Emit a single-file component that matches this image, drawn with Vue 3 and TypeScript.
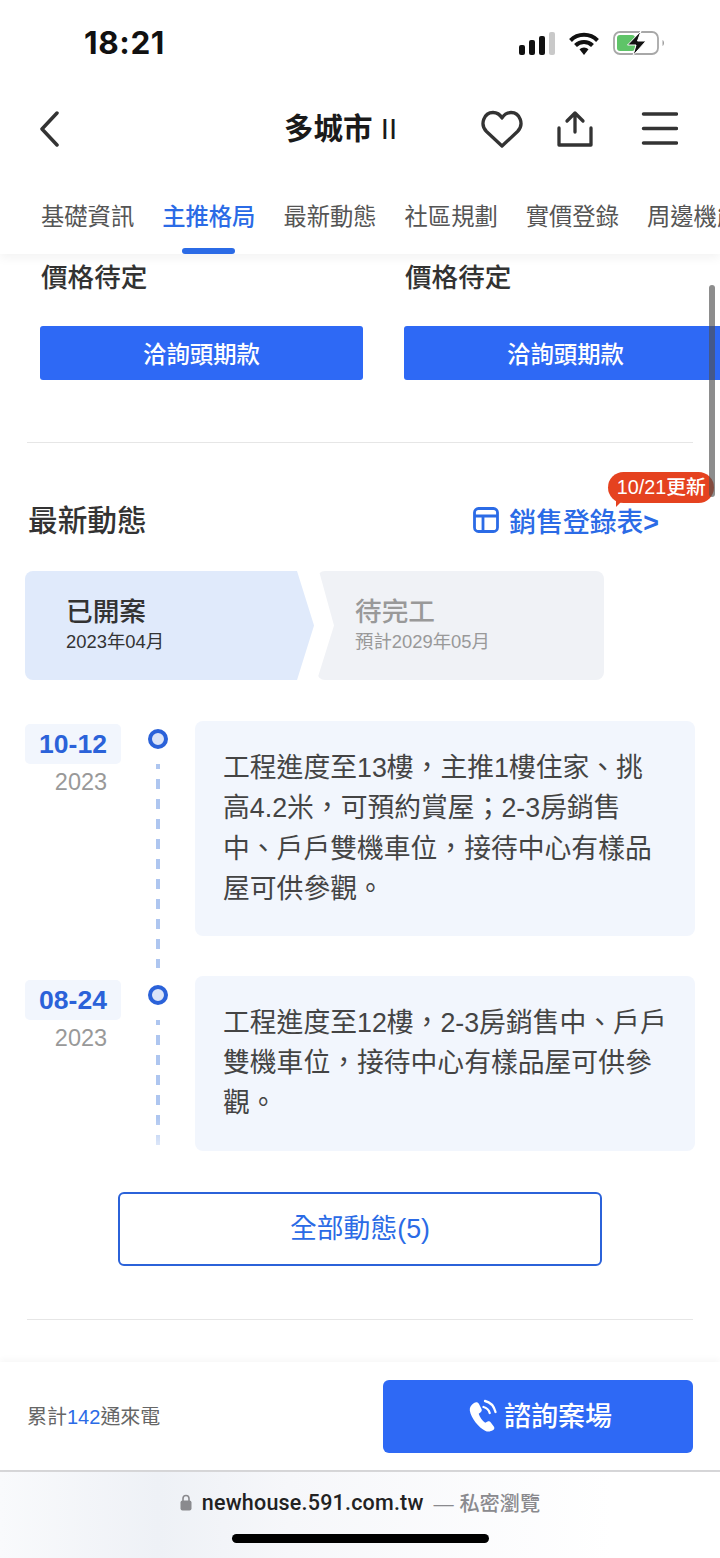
<script setup lang="ts">
const tabs: string[] = ['基礎資訊', '主推格局', '最新動態', '社區規劃', '實價登錄', '周邊機能']
const prices: number[] = [1, 2]
interface Item { date: string; year: string; lines: string[]; cls: string }
const items: Item[] = [
  { date: '10-12', year: '2023', cls: 'first', lines: ['工程進度至13樓，主推1樓住家、挑', '高4.2米，可預約賞屋；2-3房銷售', '中、戶戶雙機車位，接待中心有樣品', '屋可供參觀。'] },
  { date: '08-24', year: '2023', cls: 'last', lines: ['工程進度至12樓，2-3房銷售中、戶戶', '雙機車位，接待中心有樣品屋可供參', '觀。'] }
]
</script>

<template>
  <div class="page">
    <header class="top">
      <div class="status">
        <span class="time">18:21</span>
        <div class="status-icons">
          <svg width="36" height="23" viewBox="0 0 36 23"><rect x="0" y="13" width="6" height="10" rx="2" fill="#111"/><rect x="10" y="8" width="6" height="15" rx="2" fill="#111"/><rect x="20" y="4" width="6" height="19" rx="2" fill="#111"/><rect x="30" y="0" width="6" height="23" rx="2" fill="#c9c9c9"/></svg>
          <svg width="32" height="23" viewBox="0 0 32 23"><path d="M2.500 8.500a19 19 0 0 1 27 0M7.500 13.500a12 12 0 0 1 17 0" fill="none" stroke="#111" stroke-width="4"/><path d="M11.500 17.200a6.500 6.500 0 0 1 9 0L16 23z" fill="#111"/></svg>
          <svg width="52" height="26" viewBox="0 0 52 26"><rect x="1" y="2" width="44" height="22" rx="6" fill="none" stroke="#a8a8a8" stroke-width="1.800"/><rect x="4" y="5" width="18" height="16" rx="3" fill="#5fc468"/><path d="M49.500 10c2 .8 2 5.200 0 6z" fill="#a0a0a0"/><path d="M28 1 14.500 15h8.500l-3 10.500L33 11h-8.500l3.500-10z" fill="#111" stroke="#fff" stroke-width="1"/></svg>
        </div>
      </div>
      <nav class="nav">
        <svg class="back" width="20" height="36" viewBox="0 0 20 36"><path d="M18 2 3 18l15 16" fill="none" stroke="#333" stroke-width="3.500" stroke-linecap="round" stroke-linejoin="round"/></svg>
        <span class="title">多城市 <i>II</i></span>
        <div class="nav-icons">
          <svg width="42" height="38" viewBox="0 0 42 38"><path d="M21 36 5.500 21.500C-1.500 14.500 3 2.500 12 2.500c4 0 7 2 9 5.500 2-3.500 5-5.500 9-5.500 9 0 13.500 12 6.500 19z" fill="none" stroke="#333" stroke-width="3.300" stroke-linejoin="round"/></svg>
          <svg width="38" height="38" viewBox="0 0 38 38"><path d="M3 18v17h32V18" fill="none" stroke="#333" stroke-width="3.300" stroke-linecap="round" stroke-linejoin="round"/><path d="M19 22V3M11 11l8-8 8 8" fill="none" stroke="#333" stroke-width="3.300" stroke-linecap="round" stroke-linejoin="round"/></svg>
          <svg width="38" height="36" viewBox="0 0 38 36"><path d="M3.500 3h33M3.500 17.500h33M3.500 32h33" fill="none" stroke="#333" stroke-width="3.500" stroke-linecap="round"/></svg>
        </div>
      </nav>
      <div class="tabs">
        <span v-for="(t, i) in tabs" :key="t" class="tab" :class="{ active: i === 1 }">{{ t }}</span>
      </div>
    </header>

    <main class="content">
      <div class="prices">
        <div v-for="p in prices" :key="p" class="price">
          <div class="price-text">價格待定</div>
          <div class="price-btn">洽詢頭期款</div>
        </div>
      </div>
      <div class="rule first-rule"></div>

      <div class="head">
        <h2 class="head-title">最新動態</h2>
        <div class="sales">
          <svg width="26" height="26" viewBox="0 0 26 26"><rect x="1.500" y="1.500" width="23" height="23" rx="4" fill="none" stroke="#2b6be6" stroke-width="2.800"/><path d="M1.500 9h23M10 9v15.500" fill="none" stroke="#2b6be6" stroke-width="2.800"/></svg>
          <span>銷售登錄表<b>&gt;</b></span>
          <div class="badge">10/21更新</div>
        </div>
      </div>

      <div class="steps">
        <div class="step done">
          <div class="step-name">已開案</div>
          <div class="step-date">2023年04月</div>
        </div>
        <div class="step todo">
          <div class="step-name">待完工</div>
          <div class="step-date">預計2029年05月</div>
        </div>
      </div>

      <div class="timeline">
        <div v-for="it in items" :key="it.date" class="row" :class="it.cls">
          <div class="when">
            <div class="date">{{ it.date }}</div>
            <div class="year">{{ it.year }}</div>
          </div>
          <div class="axis">
            <span class="dot"></span>
            <span class="dash"></span>
          </div>
          <div class="card">
            <span v-for="l in it.lines" :key="l" class="line">{{ l }}</span>
          </div>
        </div>
      </div>

      <div class="all">全部動態(5)</div>
      <div class="rule end-rule"></div>
    </main>

    <footer class="foot">
      <div class="count">累計<em>142</em>通來電</div>
      <div class="call">
        <svg width="30" height="36" viewBox="0 0 30 36"><path d="M6 4c2-1.500 4-1 5 1l2.500 5c.6 1.200.2 2.400-.8 3.200l-2 1.600c1 3 3.500 7 6.500 9l2.400-1.200c1.200-.6 2.400-.3 3.200.8l3 4c1 1.300.6 2.800-.7 3.700-2.500 1.700-5.500 2-8 .6C11 29 3 19 1.800 11.500 1.400 8.500 3.300 5.500 6 4z" fill="#fff"/><path d="M17 2c5 1 9 5.500 10.500 11M15.500 8c3 .8 5.300 3 6.200 6" fill="none" stroke="#fff" stroke-width="2.300" stroke-linecap="round"/></svg>
        <span class="call-text">諮詢案場</span>
      </div>
    </footer>

    <div class="browser">
      <div class="url">
        <svg width="12" height="17" viewBox="0 0 12 17"><path d="M3 7V4.500a3 3 0 0 1 6 0V7" fill="none" stroke="#8a8a8e" stroke-width="1.600"/><rect x="0.500" y="6.500" width="11" height="10" rx="2" fill="#8a8a8e"/></svg>
        <b>newhouse.591.com.tw</b>
        <span>— 私密瀏覽</span>
      </div>
      <div class="home"></div>
    </div>

    <div class="scrollbar"></div>
  </div>
</template>

<style>
html, body { margin: 0; background: #fff; }
</style>

<style scoped>
.page {
  position: relative;
  width: 720px;
  height: 1558px;
  overflow: hidden;
  display: flex;
  flex-direction: column;
  background: #fff;
  font-family: "Liberation Sans", "Noto Sans CJK TC", sans-serif;
  color: #333;
}
.top {
  position: relative;
  z-index: 2;
  flex: none;
  height: 254px;
  background: #fff;
  box-shadow: 0 4px 10px rgba(0, 0, 0, 0.05);
}
.status {
  height: 86px;
  display: flex;
  justify-content: space-between;
  padding: 0 55px 0 84px;
  box-sizing: border-box;
}
.time {
  font-family: Inter, sans-serif;
  font-weight: 700;
  font-size: 31.500px;
  letter-spacing: 0.600px;
  line-height: 86px;
  color: #111;
}
.status-icons {
  display: flex;
  align-items: center;
  gap: 13px;
  height: 86px;
}
.nav {
  position: relative;
  height: 86px;
  display: flex;
  align-items: center;
  justify-content: space-between;
  padding: 0 42px 0 39px;
}
.title {
  position: absolute;
  left: 284px;
  top: 23px;
  line-height: 40px;
  font-size: 29.500px;
  font-weight: 700;
  color: #1a1a1a;
}
.title i { font-style: normal; font-weight: 400; }
.nav-icons {
  display: flex;
  align-items: center;
  gap: 33px;
}
.nav-icons svg + svg + svg { margin-left: 13px; }
.tabs {
  display: flex;
  gap: 28px;
  padding-left: 41px;
  height: 82px;
  white-space: nowrap;
}
.tab {
  position: relative;
  flex: none;
  font-size: 23.300px;
  line-height: 90px;
  height: 82px;
  color: #555;
}
.tab.active { color: #2b6be6; font-weight: 500; }
.tab.active::after {
  content: "";
  position: absolute;
  left: 20px;
  right: 20px;
  bottom: 0;
  height: 6px;
  border-radius: 3px;
  background: #2b6be6;
}
.content {
  flex: 1;
  min-height: 0;
  overflow: hidden;
}
.prices {
  display: flex;
  gap: 41px;
  padding: 7px 0 0 40px;
  width: 800px;
}
.price { width: 323px; flex: none; }
.price-text {
  height: 35px;
  padding-left: 1px;
  font-size: 26.600px;
  line-height: 35px;
  font-weight: 500;
  color: #333;
}
.price-btn {
  margin-top: 30px;
  height: 54px;
  border-radius: 3px;
  background: #2e69f5;
  color: #fff;
  text-align: center;
  font-size: 23.400px;
  font-weight: 500;
  line-height: 58px;
}
.rule {
  height: 1px;
  margin: 0 27px;
  background: #e6e6e6;
}
.first-rule { margin-top: 62px; }
.end-rule { margin-top: 53px; }
.head {
  margin-top: 57px;
  height: 40px;
  display: flex;
  justify-content: space-between;
  align-items: center;
  padding: 0 61px 0 28px;
}
.head-title {
  margin: 0;
  font-size: 29.700px;
  font-weight: 500;
  line-height: 42px;
  height: 40px;
  color: #333;
}
.sales {
  position: relative;
  display: flex;
  align-items: center;
  gap: 10px;
  font-size: 26.800px;
  font-weight: 500;
  color: #2b6be6;
}
.sales b { font-weight: 700; }
.badge {
  position: absolute;
  left: 135px;
  top: -29px;
  width: 106px;
  height: 31px;
  border-radius: 16px;
  background: #e5421f;
  color: #fff;
  font-size: 19.800px;
  font-weight: 500;
  line-height: 31px;
  text-align: center;
}
.badge::after {
  content: "";
  position: absolute;
  left: 8px;
  top: 27px;
  border-style: solid;
  border-width: 8px 8px 0 0;
  border-color: #e5421f transparent transparent transparent;
}
.steps {
  margin: 31px 0 0 25px;
  display: flex;
  gap: 3px;
  height: 109px;
}
.step {
  height: 109px;
  border-radius: 8px;
  box-sizing: border-box;
  padding-top: 24px;
}
.step.done {
  width: 289px;
  padding-left: 41px;
  background: #e0eafb;
  clip-path: polygon(0 0, 272px 0, 100% 50%, 272px 100%, 0 100%);
}
.step.todo {
  width: 287px;
  padding-left: 38px;
  background: #f0f2f6;
  clip-path: polygon(2px 0, 100% 0, 100% 100%, 0 100%, 17px 50%);
}
.step-name {
  font-size: 26.700px;
  line-height: 34px;
  font-weight: 500;
  color: #333;
}
.step-date {
  font-size: 18.400px;
  line-height: 26px;
  color: #333;
}
.todo .step-name, .todo .step-date { color: #999; }
.timeline {
  margin: 41px 0 0 25px;
  display: flex;
  flex-direction: column;
  gap: 40px;
}
.row { display: flex; }
.when {
  flex: none;
  width: 96px;
  padding-top: 3px;
  text-align: center;
}
.last .when { padding-top: 4px; }
.date {
  height: 40px;
  border-radius: 5px;
  background: #f2f6fd;
  color: #2b62d9;
  font-size: 26.500px;
  font-weight: 700;
  line-height: 40px;
}
.year {
  margin-top: 3px;
  padding-left: 16px;
  font-size: 23.500px;
  line-height: 30px;
  color: #999;
}
.axis {
  flex: none;
  width: 74px;
  display: flex;
  flex-direction: column;
  align-items: center;
  padding-top: 8px;
  box-sizing: border-box;
}
.last .axis { padding-top: 9px; }
.axis .dot {
  flex: none;
  width: 20px;
  height: 20px;
  box-sizing: border-box;
  border: 4px solid #2b62d9;
  border-radius: 50%;
  background: #dbe4f8;
}
.axis .dash {
  margin-top: 15px;
  width: 4px;
  flex: 1;
  background: linear-gradient(to bottom, #aec6f0 0, #aec6f0 10px, transparent 10px, transparent 20px) 0 -5px / 100% 20px repeat-y;
}
.first .dash { margin-bottom: -32px; }
.last .dash {
  margin-bottom: 5px;
  -webkit-mask-image: linear-gradient(to bottom, #000 78%, rgba(0, 0, 0, 0.4));
  mask-image: linear-gradient(to bottom, #000 78%, rgba(0, 0, 0, 0.4));
}
.card {
  flex: none;
  width: 500px;
  box-sizing: border-box;
  padding: 27px 0 26px 28px;
  border-radius: 8px;
  background: #f2f6fd;
  font-size: 26.800px;
  line-height: 40.400px;
  color: #444;
}
.line { display: block; white-space: nowrap; }
.last .card { padding-bottom: 27px; }
.all {
  margin: 41px auto 0;
  width: 484px;
  height: 74px;
  box-sizing: border-box;
  border: 2px solid #2b62d9;
  border-radius: 6px;
  color: #2b6be6;
  font-size: 26.800px;
  line-height: 71px;
  text-align: center;
}
.foot {
  flex: none;
  height: 108px;
  box-sizing: border-box;
  padding: 18px 27px 17px 28px;
  display: flex;
  align-items: center;
  justify-content: space-between;
  background: #fff;
  box-shadow: 0 -3px 6px rgba(0, 0, 0, 0.03);
  position: relative;
}
.count {
  font-size: 20px;
  line-height: 24px;
  margin-left: -1px;
  color: #666;
}
.count em { font-style: normal; color: #2b6be6; }
.call {
  width: 310px;
  height: 73px;
  box-sizing: border-box;
  padding-left: 4px;
  border-radius: 6px;
  background: #2e69f5;
  color: #fff;
  display: flex;
  align-items: center;
  justify-content: center;
  gap: 6px;
  font-size: 27px;
  font-weight: 500;
}
.call-text { line-height: 36px; }
.browser {
  flex: none;
  height: 88px;
  box-sizing: border-box;
  border-top: 2px solid #d6d6d8;
  background: linear-gradient(90deg, #f9fafc 0, #eef1f6 22%, #f6f7fa 40%, #ffffff 85%);
  display: flex;
  flex-direction: column;
  align-items: center;
}
.url {
  margin-top: 18px;
  height: 25px;
  display: flex;
  align-items: center;
  gap: 10px;
  font-size: 20.200px;
}
.url b {
  font-family: Roboto, "Liberation Sans", sans-serif;
  font-weight: 500;
  font-size: 21.500px;
  color: #222;
  letter-spacing: 0.200px;
}
.url span { color: #8a8a8e; font-weight: 500; }
.home {
  margin-top: 19px;
  width: 257px;
  height: 9px;
  border-radius: 5px;
  background: #000;
}
.scrollbar {
  position: absolute;
  z-index: 3;
  left: 709px;
  top: 285px;
  width: 6px;
  height: 212px;
  border-radius: 3px;
  background: rgba(80, 80, 80, 0.65);
}
</style>
